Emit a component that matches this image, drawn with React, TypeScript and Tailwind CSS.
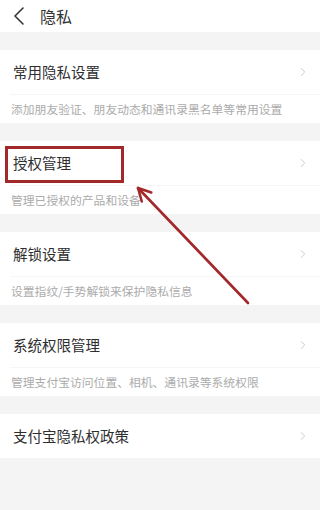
import { ChevronRight } from 'lucide-react';

const items = [
  { title: '常用隐私设置', desc: '添加朋友验证、朋友动态和通讯录黑名单等常用设置' },
  { title: '授权管理', desc: '管理已授权的产品和设备' },
  { title: '解锁设置', desc: '设置指纹/手势解锁来保护隐私信息' },
  { title: '系统权限管理', desc: '管理支付宝访问位置、相机、通讯录等系统权限' },
  { title: '支付宝隐私权政策' },
];

export default function App() {
  return (
    <div
      className="relative w-[320px] h-[510px] overflow-hidden bg-[#f4f4f4]"
      style={{ fontFamily: '"Noto Sans CJK SC", "Noto Sans", sans-serif' }}
    >
      <div className="h-[32px] bg-white flex items-center pl-[12px]">
        <svg width="14" height="20" viewBox="0 0 14 20">
          <polyline points="11,2 3,10 11,18" fill="none" stroke="#333" strokeWidth="1.6" strokeLinecap="round" strokeLinejoin="round" />
        </svg>
        <span className="ml-[14px] text-[16px] text-[#333]">隐私</span>
      </div>

      <div className="flex flex-col gap-[18px] pt-[18px]">
        {items.map((item) => (
          <div key={item.title} className="bg-white">
            <div className="h-[44px] flex items-center justify-between pl-[13px] pr-[10px]">
              <span className="text-[14.5px] text-[#2e2e2e]">{item.title}</span>
              <ChevronRight className="w-[14px] h-[14px] text-[#c8c8c8]" strokeWidth={1.6} />
            </div>
            {item.desc && (
              <div className="h-[29px] flex items-center ml-[10px] pl-[1px] border-t border-[#f6f6f6]">
                <span className="text-[11.8px] text-[#ababab]">{item.desc}</span>
              </div>
            )}
          </div>
        ))}
      </div>

      {/* annotation */}
      <div className="absolute left-[5px] top-[146px] w-[119px] h-[37px] border-[3px] border-[#a3282a]" />
      <svg className="absolute left-0 top-0" width="320" height="510">
        <g stroke="#a3282a" strokeWidth="2.6" strokeLinecap="round" fill="none">
          <line x1="248" y1="303" x2="138" y2="188" />
          <polyline points="141.8,201.5 138,188 151.3,192.4" strokeLinejoin="round" />
        </g>
      </svg>
    </div>
  );
}
